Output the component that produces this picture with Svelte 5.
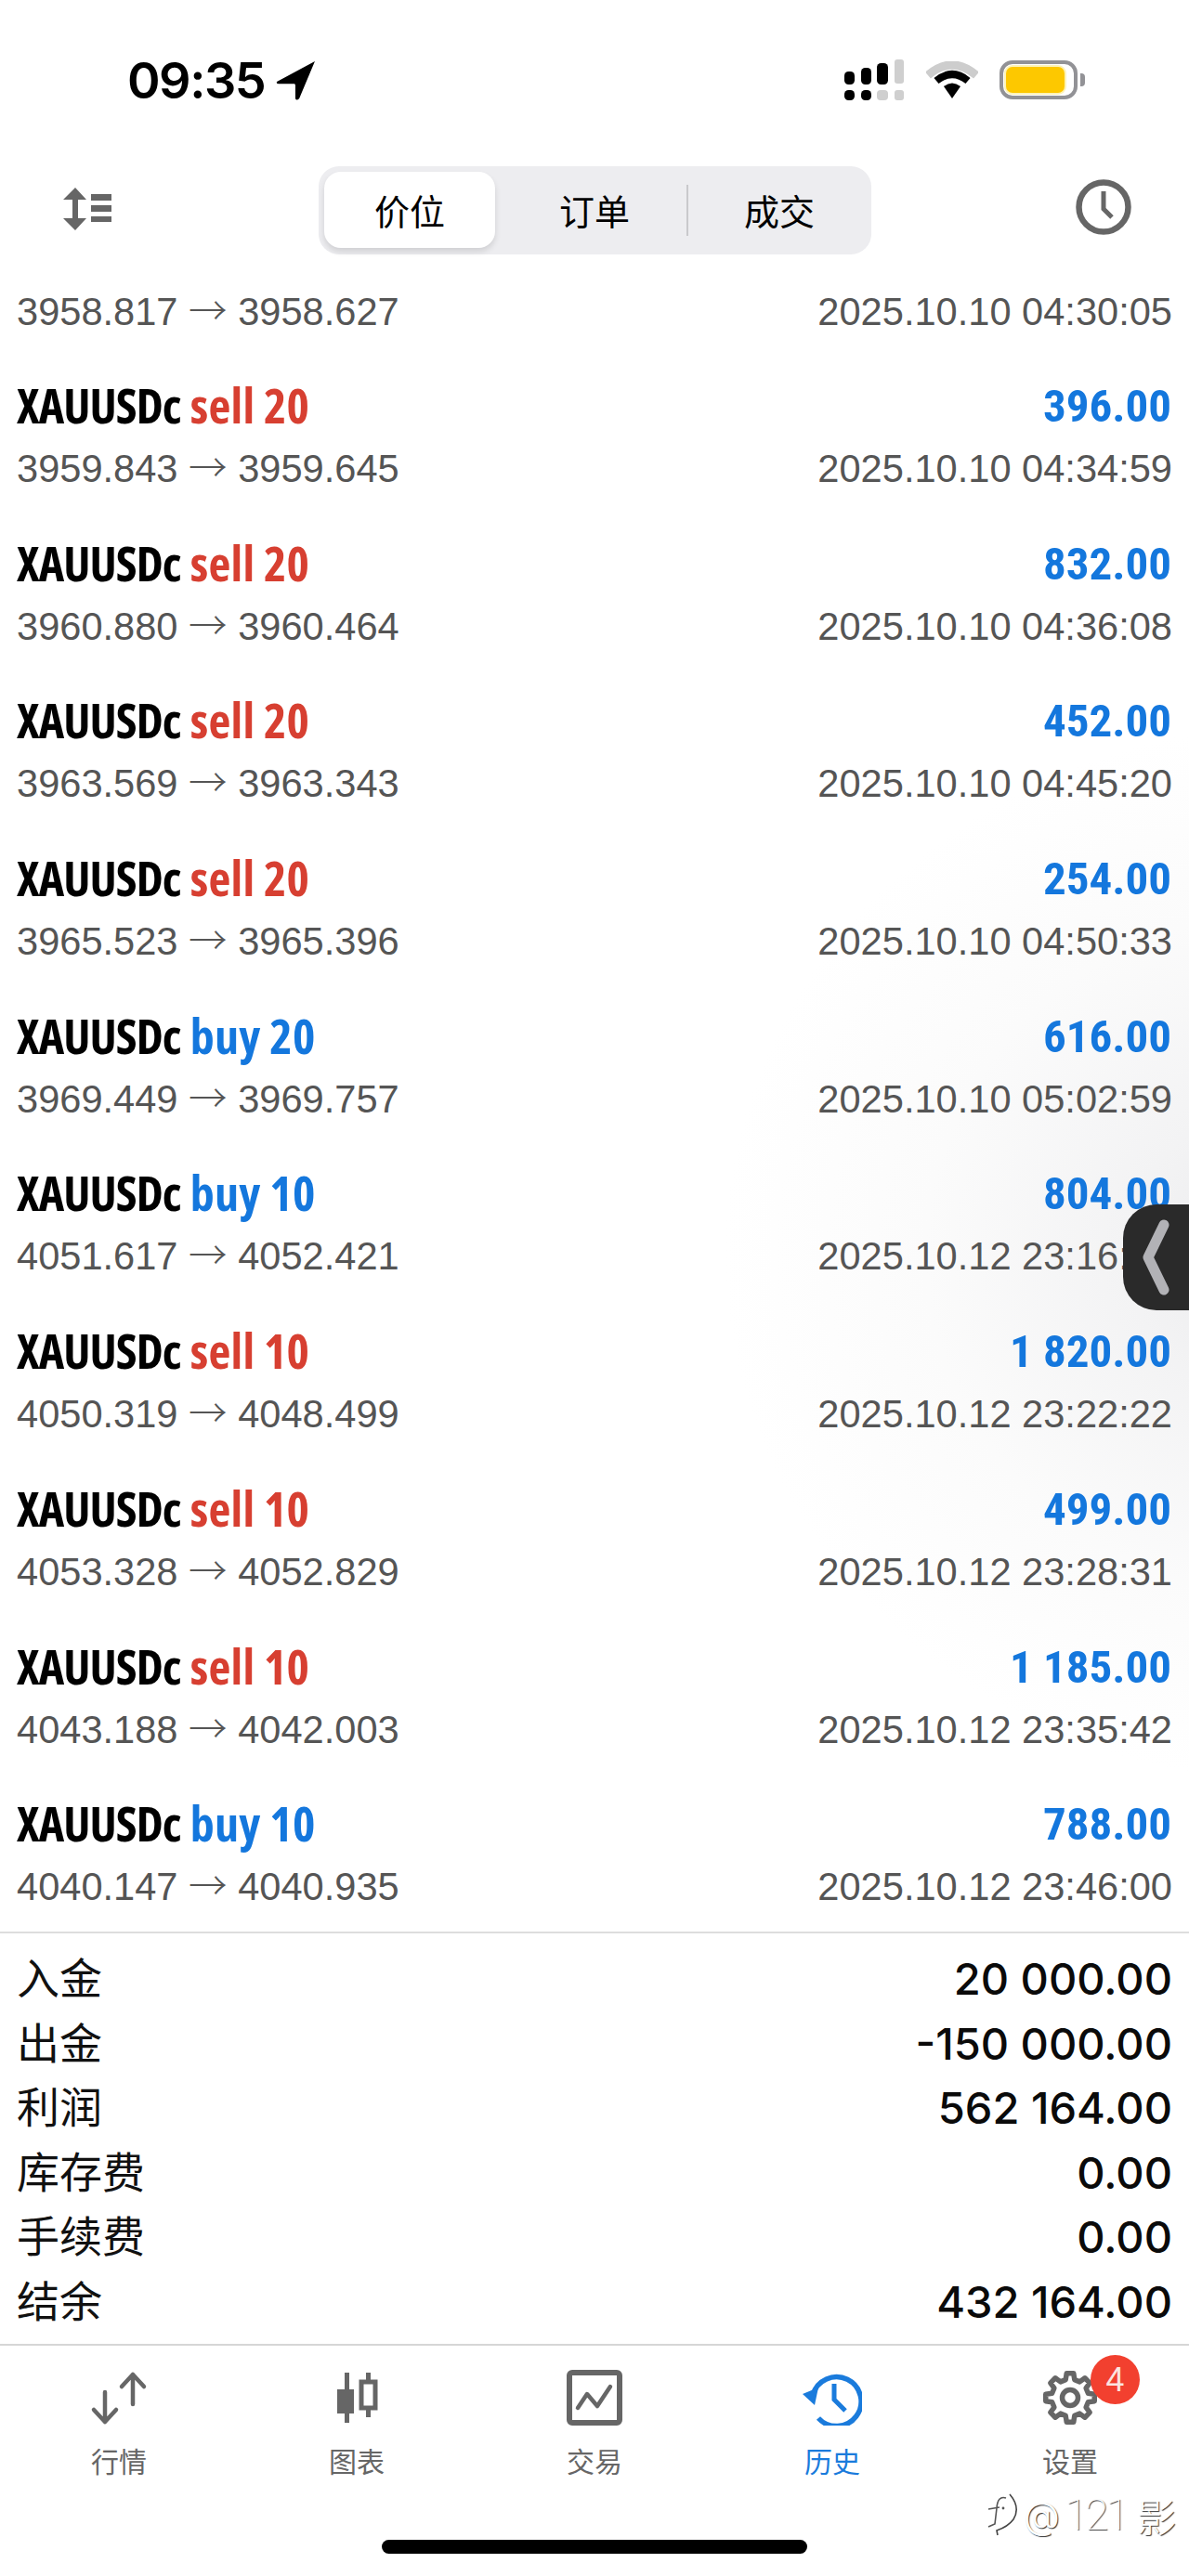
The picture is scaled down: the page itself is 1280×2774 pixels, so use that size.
<script>
  const rows = [
    ['sell 20', '396.00', '3959.843', '3959.645', '2025.10.10 04:34:59'],
    ['sell 20', '832.00', '3960.880', '3960.464', '2025.10.10 04:36:08'],
    ['sell 20', '452.00', '3963.569', '3963.343', '2025.10.10 04:45:20'],
    ['sell 20', '254.00', '3965.523', '3965.396', '2025.10.10 04:50:33'],
    ['buy 20', '616.00', '3969.449', '3969.757', '2025.10.10 05:02:59'],
    ['buy 10', '804.00', '4051.617', '4052.421', '2025.10.12 23:16:52'],
    ['sell 10', '1 820.00', '4050.319', '4048.499', '2025.10.12 23:22:22'],
    ['sell 10', '499.00', '4053.328', '4052.829', '2025.10.12 23:28:31'],
    ['sell 10', '1 185.00', '4043.188', '4042.003', '2025.10.12 23:35:42'],
    ['buy 10', '788.00', '4040.147', '4040.935', '2025.10.12 23:46:00']
  ];
  const totals = [
    ['入金', '20 000.00'],
    ['出金', '-150 000.00'],
    ['利润', '562 164.00'],
    ['库存费', '0.00'],
    ['手续费', '0.00'],
    ['结余', '432 164.00']
  ];
  const gear = (() => {
    const pts = [];
    const n = 8;
    for (let i = 0; i < n; i++) {
      const a = (i / n) * Math.PI * 2 - Math.PI / 2;
      const s = Math.PI / n;
      const p = (r, t) => `${(30 + r * Math.cos(t)).toFixed(2)},${(30 + r * Math.sin(t)).toFixed(2)}`;
      pts.push(p(20, a - s * 0.62), p(26.5, a - s * 0.36), p(26.5, a + s * 0.36), p(20, a + s * 0.62));
    }
    return pts.join(' ');
  })();
</script>

<div class="page">
  <div class="shade"></div>

  <header class="status">
    <div class="clock-group">
      <span class="time">09:35</span>
      <svg class="loc" viewBox="0 0 41 40"><path d="M40 0 L1 21 Q0 23 3 23 L19 23 Q20 23 20 25 L20 38 Q21 41 24 38 Z" /></svg>
    </div>
    <div class="status-right">
      <svg class="signal" viewBox="0 0 64 44">
        <g fill="#000">
          <rect x="0" y="13" width="11" height="14" rx="4.5" />
          <rect x="0" y="33" width="11" height="11" rx="4.5" />
          <rect x="18" y="9" width="11" height="18" rx="4.5" />
          <rect x="18" y="33" width="11" height="11" rx="4.5" />
          <rect x="35" y="4" width="12" height="23" rx="4.5" />
        </g>
        <g fill="#cfcfcf">
          <rect x="35" y="33" width="12" height="11" rx="4" />
          <rect x="54" y="0" width="10" height="26" rx="3" />
          <rect x="54" y="33" width="10" height="11" rx="3" />
        </g>
      </svg>
      <svg class="wifi" viewBox="0 0 56 40">
        <path d="M2 15 Q28 -7 54 15" fill="none" stroke="#cdcdcd" stroke-width="9" />
        <path d="M11 21 Q28 7 45 21" fill="none" stroke="#000" stroke-width="8" />
        <path d="M19 27 Q28 20 37 27 L28 40 Z" fill="#000" />
      </svg>
      <div class="battery"><div class="fill"></div></div>
      <div class="tip"></div>
    </div>
  </header>

  <nav class="toolbar">
    <svg class="sort" viewBox="0 0 52 46">
      <path d="M13 0 L25 13 L16 13 L16 33 L25 33 L13 46 L0 33 L10 33 L10 13 L0 13 Z" fill="#666" />
      <rect x="30" y="7" width="22" height="7" fill="#666" />
      <rect x="30" y="19" width="22" height="7" fill="#666" />
      <rect x="30" y="31" width="22" height="6" fill="#666" />
    </svg>
    <div class="segments">
      <div class="seg active">价位</div>
      <div class="seg mid">订单</div>
      <div class="sep"></div>
      <div class="seg end">成交</div>
    </div>
    <svg class="hist" viewBox="0 0 60 60">
      <circle cx="30" cy="30" r="26.5" fill="none" stroke="#666" stroke-width="6.5" />
      <path d="M30 13 L30 32 L39 41" fill="none" stroke="#666" stroke-width="5" />
    </svg>
  </nav>

  <main class="list">
    <div class="row first">
      <div class="sub">3958.817 <span class="arrow">→</span> 3958.627</div>
      <div class="sub">2025.10.10 04:30:05</div>
    </div>
    {#each rows as r}
      <div class="row">
        <div class="line">
          <div class="title">
            <span class="sym">XAUUSDc</span>
            <span class={r[0].startsWith('sell') ? 'sell' : 'buy'}>{r[0]}</span>
          </div>
          <div class="amount">{r[1]}</div>
        </div>
        <div class="line">
          <div class="sub">{r[2]} <span class="arrow">→</span> {r[3]}</div>
          <div class="sub">{r[4]}</div>
        </div>
      </div>
    {/each}
  </main>

  <section class="totals">
    {#each totals as t}
      <div class="total">
        <span class="t-label">{t[0]}</span>
        <span class="t-value">{t[1]}</span>
      </div>
    {/each}
  </section>

  <footer class="tabs">
    <div class="tab">
      <svg class="ic" viewBox="0 0 60 60">
        <path d="M15 24 L15 56 M3 43 L15 56 L27 43" fill="none" stroke="#666" stroke-width="4.5" stroke-linecap="round" stroke-linejoin="round" />
        <path d="M45 37 L45 5 M33 18 L45 5 L57 18" fill="none" stroke="#666" stroke-width="4.5" stroke-linecap="round" stroke-linejoin="round" />
      </svg>
      <span>行情</span>
    </div>
    <div class="tab">
      <svg class="ic" viewBox="0 0 60 60">
        <rect x="17" y="3" width="5" height="54" fill="#666" />
        <rect x="9" y="21" width="18" height="26" fill="#666" />
        <rect x="40" y="3" width="5" height="48" fill="#666" />
        <rect x="35" y="13" width="15" height="28" fill="#fff" stroke="#666" stroke-width="5" />
      </svg>
      <span>图表</span>
    </div>
    <div class="tab">
      <svg class="ic" viewBox="0 0 60 60">
        <rect x="3" y="3" width="54" height="54" rx="3" fill="none" stroke="#666" stroke-width="6" />
        <path d="M12 41 L22 26 L33 39 L47 18" fill="none" stroke="#666" stroke-width="4.5" stroke-linecap="round" stroke-linejoin="round" />
      </svg>
      <span>交易</span>
    </div>
    <div class="tab on">
      <svg class="ic" viewBox="0 0 64 60">
        <path d="M11 27 A26.5 26.5 0 1 1 17 52" fill="none" stroke="#1a7bdc" stroke-width="5.5" />
        <path d="M0 26 L17 19 L13 38 Z" fill="#1a7bdc" />
        <path d="M34 15 L34 32 L46 44" fill="none" stroke="#1a7bdc" stroke-width="5" />
      </svg>
      <span>历史</span>
    </div>
    <div class="tab">
      <svg class="ic" viewBox="0 0 60 60">
        <polygon points={gear} fill="none" stroke="#666" stroke-width="5.5" stroke-linejoin="round" />
        <circle cx="30" cy="30" r="8.5" fill="none" stroke="#666" stroke-width="5.5" />
      </svg>
      <span>设置</span>
      <div class="badge">4</div>
    </div>
  </footer>

  <div class="home"></div>
  <div class="mark">
    <svg class="mark-logo" viewBox="0 0 36 46">
      <path d="M27 1 Q39 15 31 28 Q25 36 13 40 L14 45" fill="none" stroke="#444" stroke-width="1.6" />
      <path d="M23 5 Q14 2 13 16 L11 33 L4 36 M4 17 L16 15" fill="none" stroke="#555" stroke-width="1.6" />
      <circle cx="20" cy="16" r="1.4" fill="#555" />
    </svg>
    <span class="mark-a">@</span>
    <span class="mark-n">121</span>
    <span class="mark-c">影</span>
  </div>
  <div class="handle">
    <svg viewBox="0 0 30 82" class="chev"><path d="M24 6 L7 41 L24 76" fill="none" stroke="#b2b2b6" stroke-width="11" stroke-linecap="round" stroke-linejoin="round" /></svg>
  </div>
</div>

<style>
  :global(body) {
    margin: 0;
    background: #fff;
  }
  .page {
    position: relative;
    width: 1280px;
    height: 2774px;
    overflow: hidden;
    background: #fff;
    font-family: "Liberation Sans", "Noto Sans CJK SC", sans-serif;
    color: #000;
  }
  .shade {
    position: absolute;
    left: 780px;
    top: 780px;
    width: 1240px;
    height: 1140px;
    background: radial-gradient(closest-side, #e9e9eb, #f3f3f4 30%, #fbfbfb 65%, #ffffff00);
  }
  .status {
    position: relative;
    height: 150px;
    box-sizing: border-box;
    padding: 63px 112px 0 137px;
    display: flex;
    justify-content: space-between;
    align-items: flex-start;
  }
  .clock-group {
    display: flex;
    align-items: center;
    gap: 12px;
    height: 44px;
    margin-top: 2px;
  }
  .time {
    font-family: Inter, sans-serif;
    font-size: 54px;
    font-weight: 600;
    letter-spacing: -1.5px;
    line-height: 44px;
  }
  .loc {
    width: 43px;
    height: 42px;
    fill: #000;
  }
  .status-right {
    display: flex;
    align-items: center;
    height: 45px;
  }
  .signal {
    width: 64px;
    height: 44px;
    margin-right: 24px;
  }
  .wifi {
    width: 56px;
    height: 40px;
    margin-right: 23px;
  }
  .battery {
    width: 84px;
    height: 42px;
    box-sizing: border-box;
    border: 4px solid #929296;
    border-radius: 14px;
    padding: 3px;
  }
  .fill {
    height: 100%;
    width: 63px;
    background: #fdc800;
    border-radius: 7px;
    box-shadow: 0 0 0 2px #fdf3b8;
  }
  .tip {
    width: 5px;
    height: 14px;
    margin-left: 3px;
    background: #929296;
    border-radius: 0 4px 4px 0;
  }
  .toolbar {
    position: relative;
    height: 152px;
    box-sizing: border-box;
    padding: 29px 62px 0 68px;
    display: flex;
    align-items: flex-start;
  }
  .sort {
    width: 52px;
    height: 46px;
    margin-top: 23px;
  }
  .segments {
    width: 595px;
    height: 95px;
    margin-left: 223px;
    box-sizing: border-box;
    padding: 6px 0 7px 6px;
    background: #ededf0;
    border-radius: 22px;
    display: flex;
    align-items: center;
    font-family: "Noto Sans CJK SC", sans-serif;
    font-size: 38px;
  }
  .seg {
    height: 82px;
    line-height: 82px;
    text-align: center;
  }
  .seg.mid {
    width: 198px;
  }
  .seg.end {
    width: 196px;
  }
  .seg.active {
    width: 184px;
    background: #fff;
    border-radius: 18px;
    box-shadow: 0 4px 6px #0000001f;
    margin-right: 8px;
  }
  .sep {
    width: 2px;
    height: 55px;
    background: #c9c9cc;
  }
  .hist {
    width: 60px;
    height: 60px;
    margin-left: auto;
    margin-top: 14px;
  }
  .list {
    position: relative;
    height: 1778px;
    padding: 0 18px 0 18px;
    box-sizing: border-box;
    overflow: hidden;
  }
  .row {
    height: 169.7px;
    padding-top: 16px;
    box-sizing: border-box;
  }
  .row.first {
    height: 86px;
    padding-top: 0;
    display: flex;
    justify-content: space-between;
  }
  .line {
    display: flex;
    justify-content: space-between;
    align-items: center;
    height: 67px;
  }
  .title {
    font-family: "Open Sans", sans-serif;
    font-stretch: 75%;
    font-weight: 700;
    font-size: 52px;
    white-space: pre;
    line-height: 67px;
    display: flex;
    gap: 10px;
    margin-top: -4px;
  }
  .sym {
    letter-spacing: -0.9px;
  }
  .sell {
    color: #d73f31;
    font-weight: 700;
    letter-spacing: 0.3px;
  }
  .buy {
    color: #1477dd;
    font-weight: 700;
    letter-spacing: 0.3px;
  }
  .amount {
    font-family: Roboto, sans-serif;
    font-weight: 700;
    font-stretch: 85%;
    font-size: 49px;
    color: #1477dd;
    line-height: 67px;
    margin-right: 1px;
  }
  .sub {
    font-size: 41.6px;
    color: #555;
    line-height: 67px;
    white-space: pre;
  }
  .arrow {
    font-family: "Noto Sans CJK SC", sans-serif;
    font-weight: 300;
    line-height: 1;
  }
  .totals {
    position: relative;
    box-sizing: border-box;
    height: 446px;
    border-top: 2px solid #ddd;
    border-bottom: 2px solid #d6d6d6;
    padding: 14px 18px 0 18px;
  }
  .total {
    display: flex;
    justify-content: space-between;
    height: 69.6px;
    line-height: 69.6px;
  }
  .t-label {
    font-family: "Noto Sans CJK SC", sans-serif;
    font-size: 46px;
    color: #111;
    margin-top: -3px;
  }
  .t-value {
    font-family: Inter, sans-serif;
    font-weight: 500;
    font-size: 47px;
    color: #0a0a0a;
  }
  .tabs {
    position: relative;
    display: grid;
    grid-template-columns: repeat(5, 256px);
    padding-top: 26px;
  }
  .tab {
    position: relative;
    display: flex;
    flex-direction: column;
    align-items: center;
    font-family: "Noto Sans CJK SC", sans-serif;
    font-size: 30px;
    color: #666;
    line-height: 38px;
  }
  .tab.on {
    color: #1a7bdc;
  }
  .ic {
    height: 60px;
    width: 64px;
    margin-bottom: 18px;
  }
  .badge {
    position: absolute;
    left: 150px;
    top: -16px;
    width: 53px;
    height: 53px;
    border-radius: 50%;
    background: #f2402f;
    color: #fbe4e0;
    font-family: "Liberation Sans", sans-serif;
    font-size: 36px;
    line-height: 53px;
    text-align: center;
  }
  .home {
    position: absolute;
    left: 411px;
    top: 2735px;
    width: 458px;
    height: 15px;
    border-radius: 8px;
    background: #000;
  }
  .mark {
    position: absolute;
    left: 1060px;
    top: 2684px;
    display: flex;
    align-items: center;
    height: 48px;
    color: #fff;
    text-shadow: 1px 1px 1px #333;
    white-space: pre;
  }
  .mark-logo {
    width: 36px;
    height: 46px;
    margin-right: 6px;
  }
  .mark-a {
    width: 44px;
    font-family: Inter, sans-serif;
    font-weight: 300;
    font-size: 40px;
  }
  .mark-n {
    width: 66px;
    font-family: Roboto, sans-serif;
    font-weight: 100;
    font-size: 46px;
    letter-spacing: -3px;
  }
  .mark-c {
    font-family: "Noto Sans CJK SC", sans-serif;
    font-weight: 300;
    font-size: 42px;
    margin-left: 12px;
  }
  .handle {
    position: absolute;
    left: 1209px;
    top: 1297px;
    width: 71px;
    height: 114px;
    background: #2a2a2a;
    border-radius: 36px 0 0 36px;
    display: flex;
    align-items: center;
    padding-left: 20px;
    box-sizing: border-box;
  }
  .chev {
    width: 30px;
    height: 82px;
  }
</style>
